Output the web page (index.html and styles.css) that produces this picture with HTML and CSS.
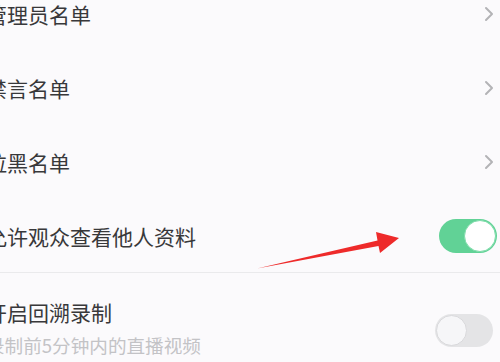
FILE: index.html
```html
<!DOCTYPE html>
<html lang="zh">
<head>
<meta charset="utf-8">
<title>设置</title>
<link rel="stylesheet" href="styles.css">
</head>
<body>
<div class="screen">
  <ul class="settings">
    <li class="row">
      <span class="label">管理员名单</span>
      <svg class="chev" viewBox="0 0 10 16" width="10" height="16"><polyline points="2,2 8,8 2,14" fill="none" stroke="#b3b3b6" stroke-width="2" stroke-linecap="round" stroke-linejoin="round"/></svg>
    </li>
    <li class="row">
      <span class="label">禁言名单</span>
      <svg class="chev" viewBox="0 0 10 16" width="10" height="16"><polyline points="2,2 8,8 2,14" fill="none" stroke="#b3b3b6" stroke-width="2" stroke-linecap="round" stroke-linejoin="round"/></svg>
    </li>
    <li class="row">
      <span class="label">拉黑名单</span>
      <svg class="chev" viewBox="0 0 10 16" width="10" height="16"><polyline points="2,2 8,8 2,14" fill="none" stroke="#b3b3b6" stroke-width="2" stroke-linecap="round" stroke-linejoin="round"/></svg>
    </li>
    <li class="row row-switch">
      <span class="label">允许观众查看他人资料</span>
      <span class="toggle toggle-on"><span class="knob"></span></span>
    </li>
    <li class="row row-sub">
      <div class="texts">
        <span class="label">开启回溯录制</span>
        <span class="sub">录制前5分钟内的直播视频</span>
      </div>
      <span class="toggle toggle-off"><span class="knob"></span></span>
    </li>
  </ul>
  <svg class="arrow" viewBox="0 0 500 362" width="500" height="362">
    <polygon points="257,268.5 377.5,240.5 376,232 399,238 380,253 378.5,246" fill="#ee2a2a"/>
  </svg>
</div>
</body>
</html>
```
FILE: styles.css
```css
html, body {
  margin: 0;
  padding: 0;
  background: #fbfafc;
}
body {
  width: 500px;
  height: 362px;
  overflow: hidden;
  font-family: "Noto Sans CJK SC", "Noto Sans", sans-serif;
}
.screen {
  position: relative;
  width: 500px;
  height: 362px;
  overflow: hidden;
}
.settings {
  list-style: none;
  margin: -23px 0 0 -14px;
  padding: 0;
}
.row {
  display: flex;
  align-items: center;
  justify-content: space-between;
  height: 74px;
  padding-right: 6px;
}
.label {
  font-size: 21px;
  line-height: 28px;
  color: #38383a;
  white-space: nowrap;
}
.chev {
  display: block;
}
.row-switch {
  height: 73px;
  border-bottom: 1px solid #eaeaec;
  margin-left: 14px;
  padding-left: 0;
  padding-right: 3px;
}
.row-switch .label {
  margin-left: -14px;
}
.row-sub {
  height: auto;
  align-items: center;
  padding-top: 25px;
  padding-right: 7px;
}
.texts {
  display: flex;
  flex-direction: column;
}
.sub {
  margin-top: 7px;
  font-size: 18.6px;
  line-height: 24px;
  color: #c3c3c6;
  white-space: nowrap;
}
.toggle {
  display: flex;
  align-items: center;
  box-sizing: border-box;
  width: 58px;
  height: 34px;
  border-radius: 17px;
  padding: 1px;
}
.toggle-on {
  background: #61d296;
  justify-content: flex-end;
}
.toggle-off {
  height: 33px;
  background: #e4e4e6;
  justify-content: flex-start;
  margin-top: 5px;
}
.knob {
  display: block;
  box-sizing: border-box;
  width: 32px;
  height: 32px;
  border-radius: 50%;
  background: #ffffff;
}
.toggle-on .knob {
  border: 1.5px solid #7edcaa;
}
.toggle-off .knob {
  width: 31px;
  height: 31px;
  background: #f6f6f8;
  border: 1px solid #d9d9dc;
}
.arrow {
  position: absolute;
  left: 0;
  top: 0;
  pointer-events: none;
}
```
